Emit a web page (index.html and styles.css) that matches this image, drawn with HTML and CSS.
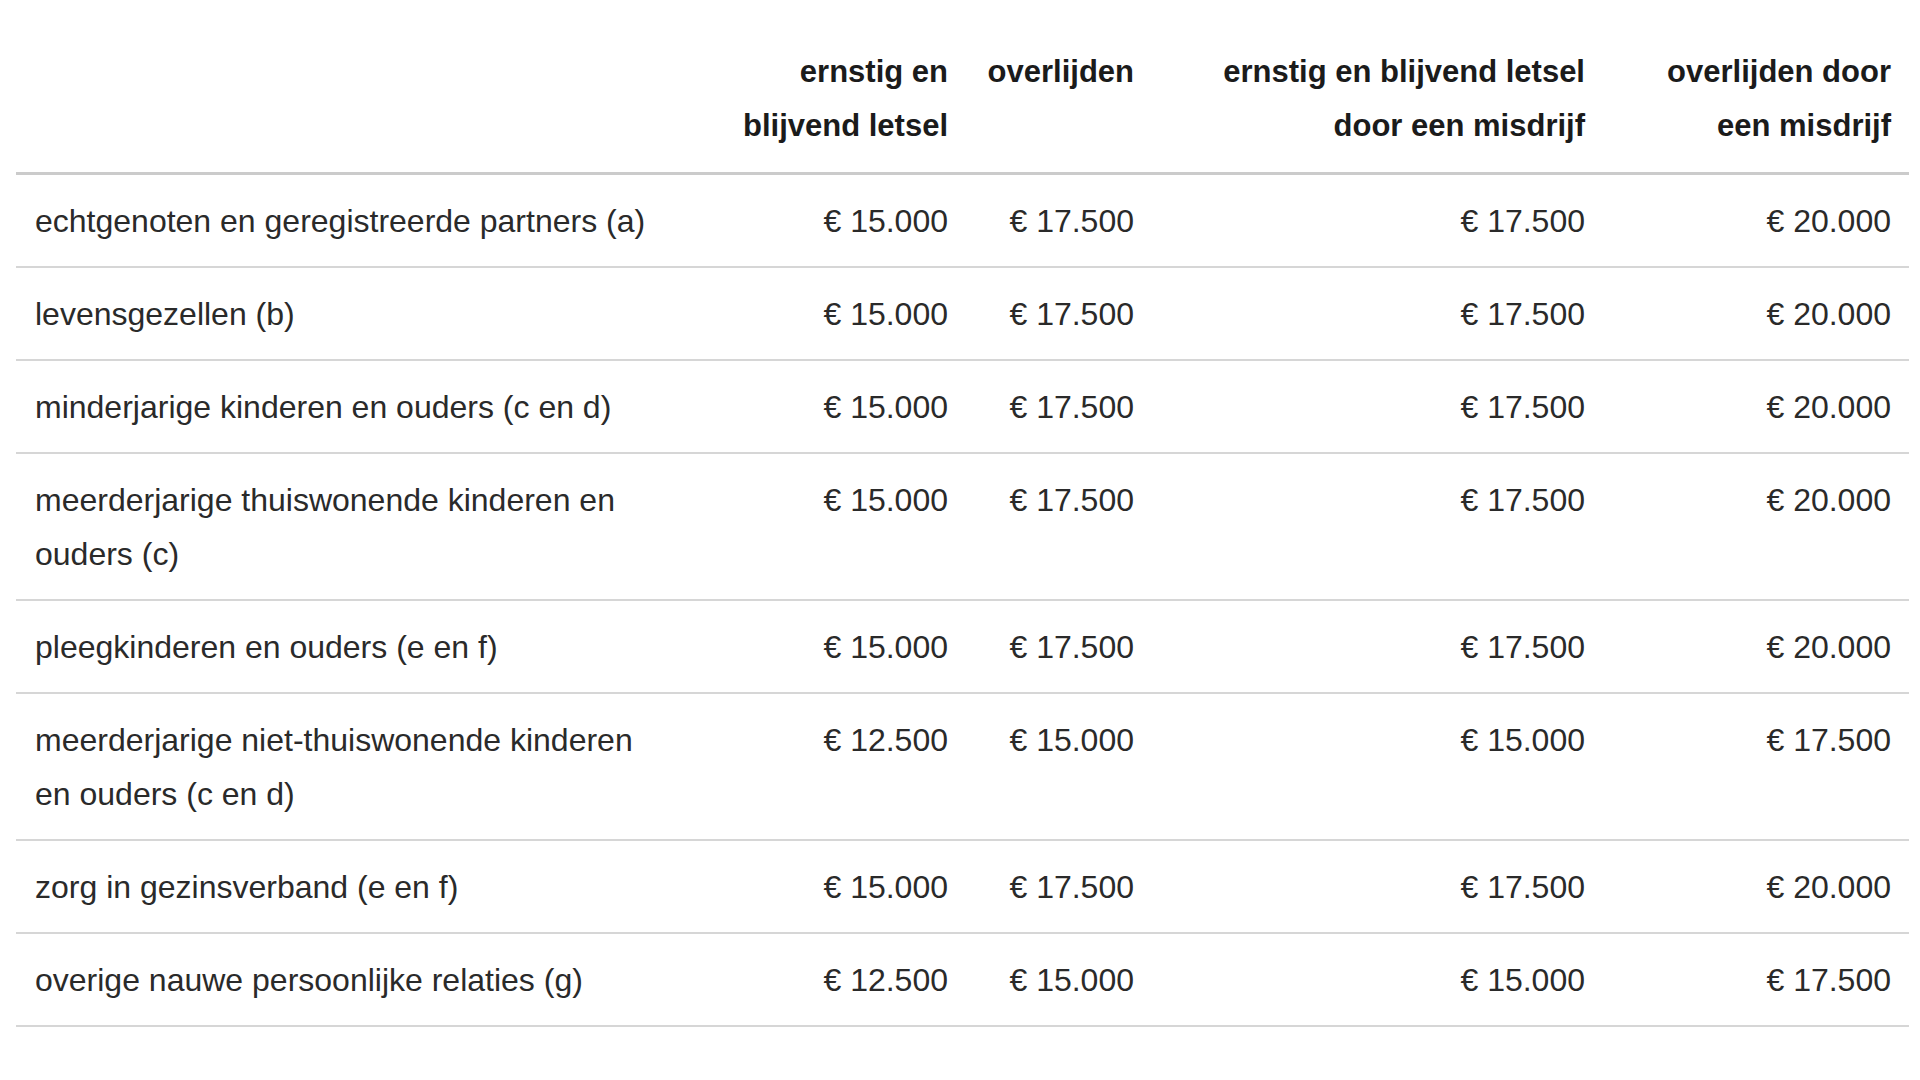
FILE: index.html
```html
<!DOCTYPE html>
<html lang="nl">
<head>
<meta charset="utf-8">
<title>Tabel tegemoetkoming</title>
<link rel="stylesheet" href="styles.css">
</head>
<body>
<table class="rates">
  <colgroup>
    <col class="c-label">
    <col class="c-a">
    <col class="c-b">
    <col class="c-c">
    <col class="c-d">
  </colgroup>
  <thead>
    <tr>
      <th></th>
      <th>ernstig en blijvend letsel</th>
      <th>overlijden</th>
      <th>ernstig en blijvend letsel door een misdrijf</th>
      <th>overlijden door een misdrijf</th>
    </tr>
  </thead>
  <tbody>
    <tr><td>echtgenoten en geregistreerde partners (a)</td><td>€ 15.000</td><td>€ 17.500</td><td>€ 17.500</td><td>€ 20.000</td></tr>
    <tr><td>levensgezellen (b)</td><td>€ 15.000</td><td>€ 17.500</td><td>€ 17.500</td><td>€ 20.000</td></tr>
    <tr><td>minderjarige kinderen en ouders (c en d)</td><td>€ 15.000</td><td>€ 17.500</td><td>€ 17.500</td><td>€ 20.000</td></tr>
    <tr><td>meerderjarige thuiswonende kinderen en ouders (c)</td><td>€ 15.000</td><td>€ 17.500</td><td>€ 17.500</td><td>€ 20.000</td></tr>
    <tr><td>pleegkinderen en ouders (e en f)</td><td>€ 15.000</td><td>€ 17.500</td><td>€ 17.500</td><td>€ 20.000</td></tr>
    <tr><td>meerderjarige niet-thuiswonende kinderen en ouders (c en d)</td><td>€ 12.500</td><td>€ 15.000</td><td>€ 15.000</td><td>€ 17.500</td></tr>
    <tr><td>zorg in gezinsverband (e en f)</td><td>€ 15.000</td><td>€ 17.500</td><td>€ 17.500</td><td>€ 20.000</td></tr>
    <tr><td>overige nauwe persoonlijke relaties (g)</td><td>€ 12.500</td><td>€ 15.000</td><td>€ 15.000</td><td>€ 17.500</td></tr>
  </tbody>
</table>
</body>
</html>
```

FILE: styles.css
```css
html, body {
  margin: 0;
  padding: 0;
  background: #ffffff;
}

body {
  font-family: "Liberation Sans", Arial, sans-serif;
  color: #2a2a2a;
}

.rates {
  margin: 26px 0 0 16px;
  width: 1893px;
  table-layout: fixed;
  border-collapse: separate;
  border-spacing: 0;
}

.c-label { width: 672px; }
.c-a { width: 278px; }
.c-b { width: 186px; }
.c-c { width: 451px; }
.c-d { width: 306px; }

.rates th,
.rates td {
  padding: 19px 18px 18px 18px;
  line-height: 54px;
  vertical-align: top;
  text-align: right;
}

.rates th {
  font-size: 31px;
  font-weight: bold;
  color: #1b1b1b;
  padding-bottom: 19px;
  border-bottom: 3px solid #cbcbcb;
}

.rates td {
  font-size: 32px;
  font-weight: normal;
  border-bottom: 2px solid #d6d6d6;
}

.rates td:first-child {
  text-align: left;
  padding-left: 19px;
}
```
